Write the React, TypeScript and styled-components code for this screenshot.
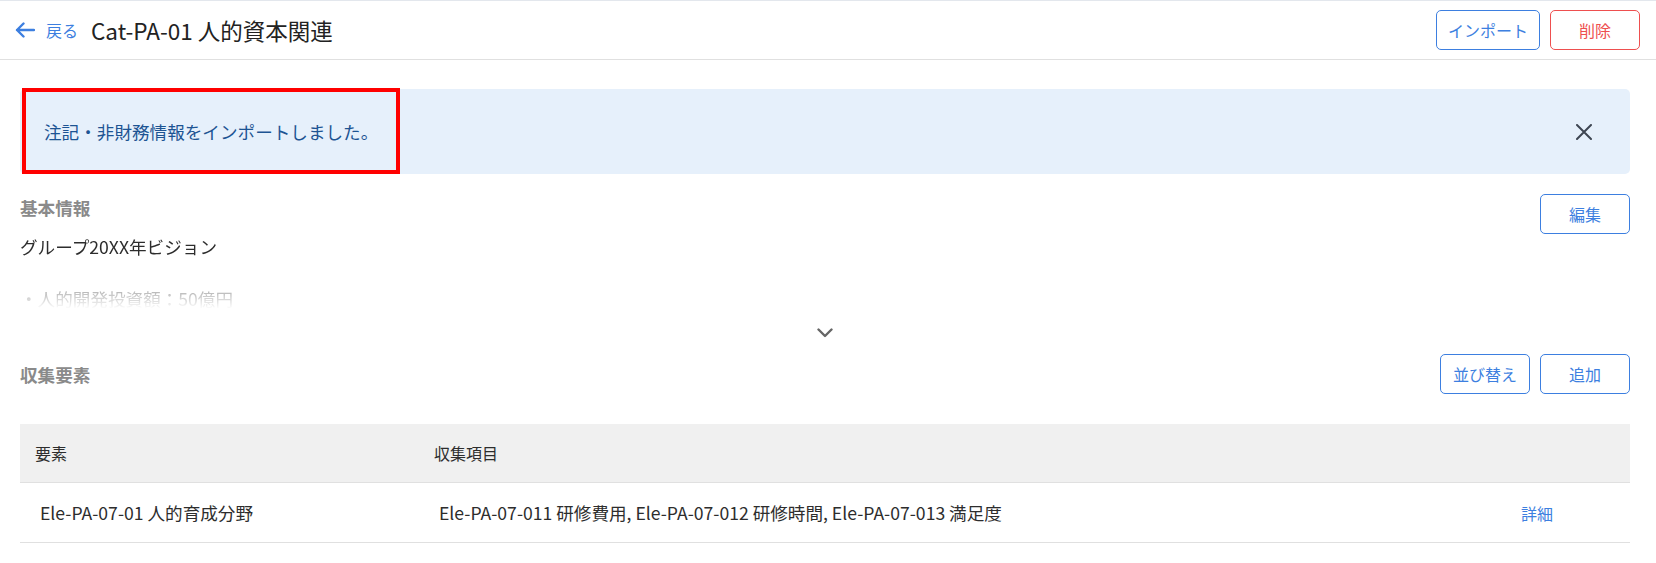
import React from 'react';
import styled, { createGlobalStyle } from 'styled-components';

const colors = {
  text: '#2d2d2d',
  title: '#222222',
  muted: '#8a8a8a',
  primary: '#3d7fe0',
  danger: '#ee4f4f',
  border: '#e0e0e0',
  alertBg: '#e6f0fb',
  alertText: '#1d5493',
  tableHead: '#f0f0f0',
};

const GlobalStyle = createGlobalStyle`
  html, body {
    margin: 0;
    padding: 0;
    background: #ffffff;
  }
  body {
    font-family: "Noto Sans CJK JP", "Noto Sans", sans-serif;
    color: ${colors.text};
  }
  * {
    box-sizing: border-box;
  }
`;

const TopBar = styled.header`
  display: flex;
  align-items: center;
  justify-content: space-between;
  height: 60px;
  padding: 0 16px 0 15px;
  border-top: 1px solid #e3e7ed;
  border-bottom: 1px solid ${colors.border};
`;

const TitleGroup = styled.div`
  display: flex;
  align-items: center;
`;

const BackLink = styled.a`
  display: inline-flex;
  align-items: center;
  gap: 11px;
  margin-right: 13px;
  color: ${colors.primary};
  font-size: 16px;
  text-decoration: none;
  cursor: pointer;
`;

const PageTitle = styled.h1`
  margin: 0;
  font-size: 22.5px;
  font-weight: 400;
  color: ${colors.title};
`;

const ButtonRow = styled.div`
  display: flex;
  align-items: center;
  gap: 10px;
`;

const Button = styled.button<{ $variant?: 'primary' | 'danger' }>`
  display: inline-flex;
  align-items: center;
  justify-content: center;
  min-width: 90px;
  height: 40px;
  padding: 0 11px;
  border: 1px solid ${(p) => (p.$variant === 'danger' ? colors.danger : colors.primary)};
  border-radius: 5px;
  background: #ffffff;
  color: ${(p) => (p.$variant === 'danger' ? colors.danger : colors.primary)};
  font-family: inherit;
  font-size: 16px;
  cursor: pointer;
`;

const Main = styled.main`
  padding: 29px 26px 40px 20px;
`;

const Alert = styled.div`
  position: relative;
  display: flex;
  align-items: center;
  justify-content: space-between;
  height: 85px;
  padding: 0 30px 0 24px;
  border-radius: 5px;
  background: ${colors.alertBg};
  color: ${colors.alertText};
  font-size: 17.6px;
`;

const Highlight = styled.span`
  position: absolute;
  left: 2px;
  top: -1px;
  width: 378px;
  height: 86px;
  border: 4px solid #ff0000;
  pointer-events: none;
`;

const CloseButton = styled.button`
  display: flex;
  align-items: center;
  justify-content: center;
  width: 32px;
  height: 32px;
  padding: 0;
  border: none;
  background: transparent;
  cursor: pointer;
`;

const Section = styled.section<{ $gap?: number }>`
  margin-top: ${(p) => p.$gap ?? 0}px;
`;

const SectionHeader = styled.div<{ $align?: string }>`
  display: flex;
  align-items: ${(p) => p.$align || 'center'};
  justify-content: space-between;
  min-height: 40px;
`;

const SectionTitle = styled.h2`
  margin: 0;
  font-size: 17.6px;
  line-height: 27px;
  font-weight: 700;
  color: ${colors.muted};
`;

const Collapsed = styled.div`
  height: 78px;
  font-size: 17.6px;
  line-height: 26px;
  color: ${colors.text};
  -webkit-mask-image: linear-gradient(to bottom, #000 30%, transparent 96%);
  mask-image: linear-gradient(to bottom, #000 30%, transparent 96%);
`;

const Line = styled.p`
  margin: 0;
  min-height: 26px;
`;

const ExpandToggle = styled.button`
  display: flex;
  align-items: center;
  justify-content: center;
  width: 100%;
  height: 42px;
  padding: 0;
  border: none;
  background: transparent;
  cursor: pointer;
`;

const Table = styled.div`
  margin-top: 30px;
`;

const TableRow = styled.div<{ $head?: boolean }>`
  display: grid;
  grid-template-columns: 399px 1fr 129px;
  align-items: center;
  height: ${(p) => (p.$head ? 59 : 60)}px;
  background: ${(p) => (p.$head ? colors.tableHead : '#ffffff')};
  border-bottom: 1px solid ${colors.border};
`;

const Cell = styled.div<{ $head?: boolean }>`
  padding: 0 ${(p) => (p.$head ? 15 : 20)}px;
  font-size: ${(p) => (p.$head ? 16 : 17.6)}px;
  color: ${colors.text};
  white-space: nowrap;
`;

const DetailLink = styled.a`
  color: ${colors.primary};
  font-size: 16px;
  text-decoration: none;
  cursor: pointer;
`;

const ArrowLeft = () => (
  <svg width="20" height="16" viewBox="0 0 20 16" fill="none">
    <path
      d="M19 8H2M8.5 1.5L2 8l6.5 6.5"
      stroke={colors.primary}
      strokeWidth="2.4"
      strokeLinecap="round"
      strokeLinejoin="round"
    />
  </svg>
);

const CloseIcon = () => (
  <svg width="16" height="16" viewBox="0 0 16 16" fill="none">
    <path d="M1 1l14 14M15 1L1 15" stroke="#3e4652" strokeWidth="2" strokeLinecap="round" />
  </svg>
);

const ChevronDown = () => (
  <svg width="16" height="10" viewBox="0 0 16 10" fill="none">
    <path
      d="M1.5 1.5L8 8l6.5-6.5"
      stroke="#666666"
      strokeWidth="2.4"
      strokeLinecap="round"
      strokeLinejoin="round"
    />
  </svg>
);

const elements = [
  {
    name: 'Ele-PA-07-01 人的育成分野',
    items: 'Ele-PA-07-011 研修費用, Ele-PA-07-012 研修時間, Ele-PA-07-013 満足度',
  },
];

export default function App() {
  return (
    <>
      <GlobalStyle />
      <TopBar>
        <TitleGroup>
          <BackLink>
            <ArrowLeft />
            戻る
          </BackLink>
          <PageTitle>Cat-PA-01 人的資本関連</PageTitle>
        </TitleGroup>
        <ButtonRow>
          <Button>インポート</Button>
          <Button $variant="danger">削除</Button>
        </ButtonRow>
      </TopBar>

      <Main>
        <Alert>
          <span>注記・非財務情報をインポートしました。</span>
          <CloseButton aria-label="閉じる">
            <CloseIcon />
          </CloseButton>
          <Highlight />
        </Alert>

        <Section $gap={20}>
          <SectionHeader $align="flex-start">
            <SectionTitle>基本情報</SectionTitle>
            <Button>編集</Button>
          </SectionHeader>
          <Collapsed>
            <Line>グループ20XX年ビジョン</Line>
            <Line />
            <Line>・人的開発投資額：50億円</Line>
          </Collapsed>
          <ExpandToggle aria-label="もっと見る">
            <ChevronDown />
          </ExpandToggle>
        </Section>

        <Section>
          <SectionHeader>
            <SectionTitle>収集要素</SectionTitle>
            <ButtonRow>
              <Button>並び替え</Button>
              <Button>追加</Button>
            </ButtonRow>
          </SectionHeader>
          <Table>
            <TableRow $head>
              <Cell $head>要素</Cell>
              <Cell $head>収集項目</Cell>
              <Cell $head />
            </TableRow>
            {elements.map((el) => (
              <TableRow key={el.name}>
                <Cell>{el.name}</Cell>
                <Cell>{el.items}</Cell>
                <Cell>
                  <DetailLink>詳細</DetailLink>
                </Cell>
              </TableRow>
            ))}
          </Table>
        </Section>
      </Main>
    </>
  );
}
